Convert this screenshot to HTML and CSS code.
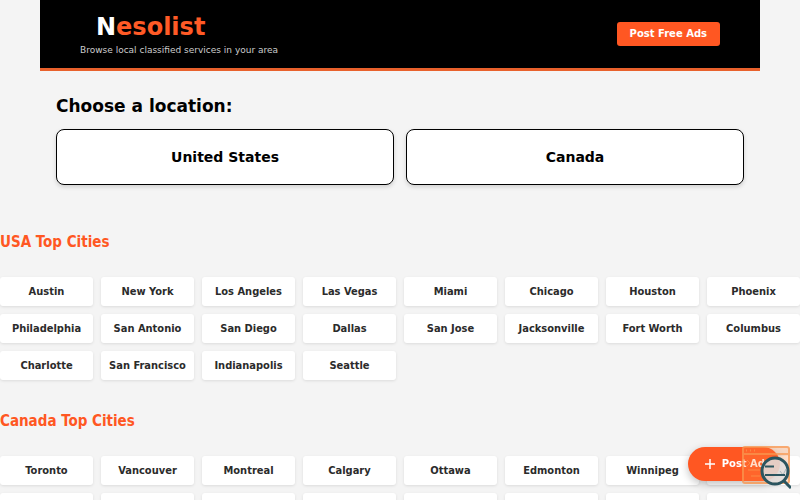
FILE: index.html
```html
<!DOCTYPE html>
<html lang="en">
<head>
    <meta charset="UTF-8">
    <meta name="viewport" content="width=device-width, initial-scale=1.0">
    <title>Nesolist</title>
    <link rel="stylesheet" href="styles.css">
</head>
<body>
    <header class="site-header">
        <div class="brand">
            <a href="#" class="logo"><span>N</span>esolist</a>
            <p class="tagline">Browse local classified services in your area</p>
        </div>
        <a href="#" class="post-btn">Post Free Ads</a>
    </header>

    <main>
        <section class="location">
            <h1>Choose a location:</h1>
            <div class="countries">
                <a href="#" class="country">United States</a>
                <a href="#" class="country">Canada</a>
            </div>
        </section>

        <!-- USA -->
        <section class="cities">
            <h2>USA Top Cities</h2>
            <div class="city-grid">
                <a href="#" class="city">Austin</a>
                <a href="#" class="city">New York</a>
                <a href="#" class="city">Los Angeles</a>
                <a href="#" class="city">Las Vegas</a>
                <a href="#" class="city">Miami</a>
                <a href="#" class="city">Chicago</a>
                <a href="#" class="city">Houston</a>
                <a href="#" class="city">Phoenix</a>
                <a href="#" class="city">Philadelphia</a>
                <a href="#" class="city">San Antonio</a>
                <a href="#" class="city">San Diego</a>
                <a href="#" class="city">Dallas</a>
                <a href="#" class="city">San Jose</a>
                <a href="#" class="city">Jacksonville</a>
                <a href="#" class="city">Fort Worth</a>
                <a href="#" class="city">Columbus</a>
                <a href="#" class="city">Charlotte</a>
                <a href="#" class="city">San Francisco</a>
                <a href="#" class="city">Indianapolis</a>
                <a href="#" class="city">Seattle</a>
            </div>
        </section>

        <!-- Canada -->
        <section class="cities">
            <h2>Canada Top Cities</h2>
            <div class="city-grid">
                <a href="#" class="city">Toronto</a>
                <a href="#" class="city">Vancouver</a>
                <a href="#" class="city">Montreal</a>
                <a href="#" class="city">Calgary</a>
                <a href="#" class="city">Ottawa</a>
                <a href="#" class="city">Edmonton</a>
                <a href="#" class="city">Winnipeg</a>
                <div class="city"></div>
                <div class="city"></div>
                <div class="city"></div>
                <div class="city"></div>
                <div class="city"></div>
                <div class="city"></div>
                <div class="city"></div>
                <div class="city"></div>
                <div class="city"></div>
            </div>
        </section>
    </main>

    <a href="#" class="floating-post">
        <svg class="plus" viewBox="0 0 12 12" aria-hidden="true"><path d="M6 1v10M1 6h10"/></svg>
        Post Ad
    </a>

    <!-- browser window with magnifier -->
    <svg class="search-badge" viewBox="0 0 50 44" aria-hidden="true">
        <g class="badge-window">
            <rect x="2" y="2" width="46" height="36" rx="2"/>
            <path d="M2 9h46M5 5.5h1M9 5.5h1M13 5.5h1"/>
            <path class="thin" d="M6 15l3 3-3 3M7 25h12M10 31h9M37 15h6"/>
        </g>
        <path class="badge-handle" d="M43 36l7 7"/>
        <circle class="badge-lens" cx="34" cy="26" r="13"/>
        <path class="badge-check" d="M39 26l3 4 3-6"/>
        <path class="badge-lines" d="M24 21.5h9M24 30h20"/>
    </svg>
</body>
</html>
```
FILE: styles.css
```css
* {
    box-sizing: border-box;
}

body {
    margin: 0;
    background-color: #f4f4f4;
    color: #000;
    font-family: "DejaVu Sans", sans-serif;
    overflow-x: hidden;
}

a {
    text-decoration: none;
}

/* Header */
.site-header {
    display: flex;
    justify-content: space-between;
    align-items: center;
    margin: 0 40px;
    padding: 11px 40px;
    background-color: #000;
    border-bottom: 3px solid #e8612c;
}

.logo {
    display: block;
    padding-left: 16px;
    color: #ff5a26;
    font-size: 24px;
    font-weight: bold;
    line-height: 32px;
}

.logo span {
    color: #fff;
}

.tagline {
    margin: 0;
    color: #ccc;
    font-size: 9px;
    line-height: 14px;
}

.post-btn {
    padding: 4px 13px;
    background-color: #ff5722;
    border-radius: 3px;
    color: #fff;
    font-size: 10px;
    font-weight: bold;
    line-height: 16px;
}

/* Country picker */
.location {
    margin: 0 40px;
    padding: 24px 16px 46px;
}

.location h1 {
    margin: 0 0 12px;
    font-size: 17px;
    line-height: 22px;
}

.countries {
    display: grid;
    grid-template-columns: 1fr 1fr;
    gap: 12px;
}

.country {
    padding: 16px;
    background-color: #fff;
    border: 1px solid #000;
    border-radius: 8px;
    box-shadow: 0 2px 4px rgba(0, 0, 0, 0.15);
    color: #000;
    font-size: 14px;
    font-weight: bold;
    line-height: 22px;
    text-align: center;
}

/* City lists */
.cities {
    margin-bottom: 30px;
}

.cities h2 {
    margin: 0 0 24px;
    color: #ff5722;
    font-family: "DejaVu Sans Condensed", "DejaVu Sans", sans-serif;
    font-size: 15px;
    line-height: 22px;
}

.city-grid {
    display: grid;
    grid-template-columns: repeat(8, 1fr);
    gap: 8px;
}

.city {
    min-height: 29px;
    padding: 7px 2px;
    background-color: #fff;
    border-radius: 3px;
    box-shadow: 0 1px 3px rgba(0, 0, 0, 0.1);
    color: #2b2b2b;
    font-family: "DejaVu Sans Condensed", "DejaVu Sans", sans-serif;
    font-size: 11px;
    font-weight: bold;
    line-height: 15px;
    text-align: center;
    white-space: nowrap;
}

/* Floating button */
.floating-post {
    position: fixed;
    right: 20px;
    bottom: 19px;
    display: flex;
    align-items: center;
    gap: 6px;
    padding: 9px 15px 9px 16px;
    background-color: #ff5722;
    border-radius: 17px;
    box-shadow: 0 3px 8px rgba(0, 0, 0, 0.25);
    color: #fff;
    font-size: 10px;
    font-weight: bold;
    line-height: 16px;
}

.plus {
    width: 12px;
    height: 12px;
    fill: none;
    stroke: #fff;
    stroke-width: 1.5;
}

.search-badge {
    position: fixed;
    right: 9px;
    bottom: 11px;
    width: 50px;
    height: 44px;
    fill: none;
}

.badge-window {
    fill: rgba(255, 140, 70, 0.35);
    stroke: #f9964f;
    stroke-width: 2;
    opacity: 0.8;
}

.badge-window path {
    fill: none;
}

.badge-window .thin {
    stroke-width: 1;
}

.badge-lens {
    fill: rgba(225, 225, 225, 0.85);
    stroke: #2b555f;
    stroke-width: 3;
}

.badge-check {
    stroke: #a9b3b6;
}

.badge-lines {
    stroke: #2b555f;
    stroke-width: 2;
}

.badge-handle {
    stroke: #2b555f;
    stroke-width: 3;
}
```
